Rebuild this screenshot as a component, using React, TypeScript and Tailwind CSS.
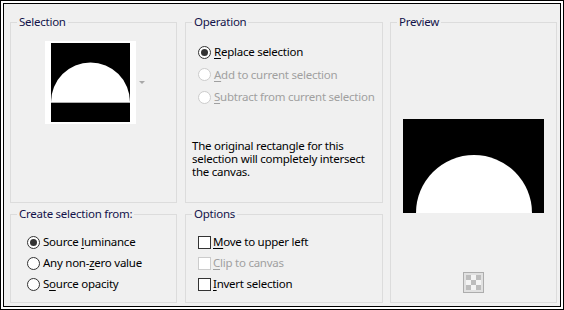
import React from 'react';

const font = { fontFamily: '"Noto Sans", "Liberation Sans", sans-serif' };

function Group({ title, className, children }: { title: string; className: string; children?: React.ReactNode }) {
  return (
    <fieldset className={`border border-[#dcdcdc] m-0 p-0 min-w-0 ${className}`}>
      <legend className="ml-[6px] px-[2px] text-[11.5px] tracking-[-0.25px] leading-[16px] text-[#13134a]">{title}</legend>
      {children}
    </fieldset>
  );
}

function Radio({ checked, disabled, label, u }: { checked?: boolean; disabled?: boolean; label: string; u: number }) {
  return (
    <div className="flex items-center gap-[3px]">
      <span
        className={`w-[13px] h-[13px] rounded-full border bg-white flex items-center justify-center shrink-0 ${
          disabled ? 'border-[#cccccc]' : 'border-[#333333]'
        }`}
      >
        {checked && <span className="w-[7px] h-[7px] rounded-full bg-[#333333]" />}
      </span>
      <Label text={label} u={u} disabled={disabled} />
    </div>
  );
}

function Check({ disabled, label, u }: { disabled?: boolean; label: string; u: number }) {
  return (
    <div className="flex items-center gap-[2px]">
      <span className={`w-[13px] h-[13px] border bg-white shrink-0 ${disabled ? 'border-[#cccccc]' : 'border-[#333333]'}`} />
      <Label text={label} u={u} disabled={disabled} />
    </div>
  );
}

function Label({ text, u, disabled }: { text: string; u: number; disabled?: boolean }) {
  return (
    <span
      className={`text-[11.5px] tracking-[-0.25px] leading-[16px] whitespace-nowrap ${
        disabled ? 'text-[#a0a0a0]' : 'text-black'
      }`}
    >
      {text.slice(0, u)}
      <span className="underline underline-offset-[2px]">{text[u]}</span>
      {text.slice(u + 1)}
    </span>
  );
}

export default function App() {
  return (
    <div className="w-[564px] h-[310px] border border-black bg-white p-[2px]" style={font}>
      <div className="w-full h-full border border-black bg-[#f0f0f0] flex pl-[6px] pt-[10px]">
        <div className="flex flex-col gap-[3px] w-[167px]">
          <Group title="Selection" className="h-[189px]">
            <div className="flex items-center gap-[3px] ml-[34px] mt-[11px]">
              <div className="w-[91px] h-[83px] bg-white pl-[6px] pt-[2px]">
                <svg width="79" height="79" viewBox="0 0 79 79">
                  <rect width="79" height="79" fill="#000" />
                  <path d="M0 59 A39.5 39.5 0 0 1 79 59 Z" fill="#fff" />
                  <line x1="0" y1="59.5" x2="79" y2="59.5" stroke="#b0b0b0" strokeWidth="1" />
                </svg>
              </div>
              <svg width="6" height="4" viewBox="0 0 6 4">
                <path d="M0 0 H6 L3 3 Z" fill="#a8a8a8" />
              </svg>
            </div>
          </Group>
          <Group title="Create selection from:" className="h-[97px]">
            <div className="flex flex-col pl-[16px] mt-[9.5px]">
              <div className="h-[21px] flex items-center"><Radio checked label="Source luminance" u={7} /></div>
              <div className="h-[21px] flex items-center"><Radio label="Any non-zero value" u={8} /></div>
              <div className="h-[21px] flex items-center"><Radio label="Source opacity" u={1} /></div>
            </div>
          </Group>
        </div>

        <div className="flex flex-col gap-[3px] w-[198px] ml-[8px]">
          <Group title="Operation" className="h-[189px]">
            <div className="flex flex-col pl-[12px] mt-[11px]">
              <div className="h-[22.5px] flex items-center"><Radio checked label="Replace selection" u={0} /></div>
              <div className="h-[22.5px] flex items-center"><Radio disabled label="Add to current selection" u={0} /></div>
              <div className="h-[22.5px] flex items-center"><Radio disabled label="Subtract from current selection" u={0} /></div>
            </div>
            <p className="pl-[6px] mt-[30px] text-[11.5px] tracking-[-0.25px] leading-[13px] text-black">
              The original rectangle for this
              <br />
              selection will completely intersect
              <br />
              the canvas.
            </p>
          </Group>
          <Group title="Options" className="h-[97px]">
            <div className="flex flex-col pl-[12px] mt-[9.5px]">
              <div className="h-[21px] flex items-center"><Check label="Move to upper left" u={0} /></div>
              <div className="h-[21px] flex items-center"><Check disabled label="Clip to canvas" u={0} /></div>
              <div className="h-[21px] flex items-center"><Check label="Invert selection" u={0} /></div>
            </div>
          </Group>
        </div>

        <div className="w-[167px] ml-[7px]">
          <Group title="Preview" className="h-[289px]">
            <div className="flex flex-col items-center">
              <svg width="141" height="94" viewBox="0 0 141 94" className="mt-[89px]">
                <rect width="141" height="94" fill="#000" />
                <circle cx="71" cy="94" r="58" fill="#fff" />
              </svg>
              <div className="mt-[59px] w-[21px] h-[21px] border border-[#adadad] bg-[#e1e1e1] flex items-center justify-center">
                <svg width="15" height="15" viewBox="0 0 15 15">
                  <rect width="15" height="15" fill="#f4f4f4" />
                  <rect x="0" y="0" width="5" height="5" fill="#bdbdbd" />
                  <rect x="10" y="0" width="5" height="5" fill="#bdbdbd" />
                  <rect x="5" y="5" width="5" height="5" fill="#bdbdbd" />
                  <rect x="0" y="10" width="5" height="5" fill="#bdbdbd" />
                  <rect x="10" y="10" width="5" height="5" fill="#bdbdbd" />
                </svg>
              </div>
            </div>
          </Group>
        </div>
      </div>
    </div>
  );
}
